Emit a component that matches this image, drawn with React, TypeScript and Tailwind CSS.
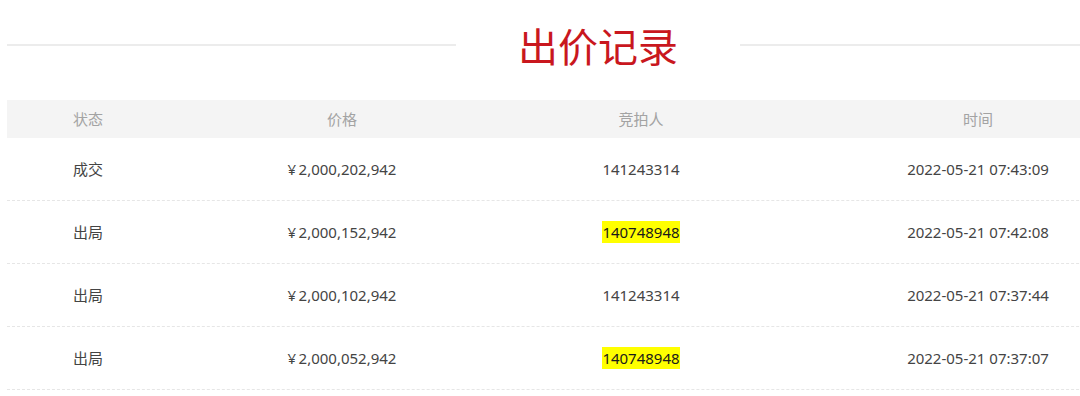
import React from 'react';

interface Bid {
  status: string;
  price: string;
  bidder: string;
  time: string;
  highlight?: boolean;
}

const BIDS: Bid[] = [
  { status: '成交', price: '2,000,202,942', bidder: '141243314', time: '2022-05-21 07:43:09' },
  { status: '出局', price: '2,000,152,942', bidder: '140748948', time: '2022-05-21 07:42:08', highlight: true },
  { status: '出局', price: '2,000,102,942', bidder: '141243314', time: '2022-05-21 07:37:44' },
  { status: '出局', price: '2,000,052,942', bidder: '140748948', time: '2022-05-21 07:37:07', highlight: true },
];

const cols = 'grid grid-cols-[162px_346px_252px_422px]';

function App() {
  return (
    <div
      className="h-[396px] w-full overflow-hidden bg-white"
      style={{ fontFamily: '"Noto Sans", "Noto Sans CJK SC", sans-serif' }}
    >
      <div className="ml-[7px] w-[1182px]">
        <div className="flex h-[90px] items-center">
          <div className="h-[2px] flex-1 bg-[#ececec]" />
          <h2
            className="px-[62px] text-[40px] leading-none text-[#c9171e]"
            style={{ fontFamily: '"Noto Sans CJK SC", sans-serif' }}
          >
            出价记录
          </h2>
          <div className="h-[2px] flex-1 bg-[#ececec]" />
        </div>

        <div className={`${cols} mt-[10px] h-[38px] items-center bg-[#f4f4f4] text-center text-[15px] text-[#a3a3a3]`}>
          <span>状态</span>
          <span>价格</span>
          <span>竞拍人</span>
          <span>时间</span>
        </div>

        {BIDS.map((bid, i) => (
          <div
            key={i}
            className={`${cols} h-[63px] items-center border-b border-dashed border-[#e6e6e6] text-center text-[15px] text-[#444]`}
          >
            <span>{bid.status}</span>
            <span>¥&#8201;{bid.price}</span>
            <span>
              <span className={bid.highlight ? 'bg-[#ffff00] py-[1px] text-[#1a1a1a]' : ''}>{bid.bidder}</span>
            </span>
            <span>{bid.time}</span>
          </div>
        ))}
      </div>
    </div>
  );
}

export default App;
